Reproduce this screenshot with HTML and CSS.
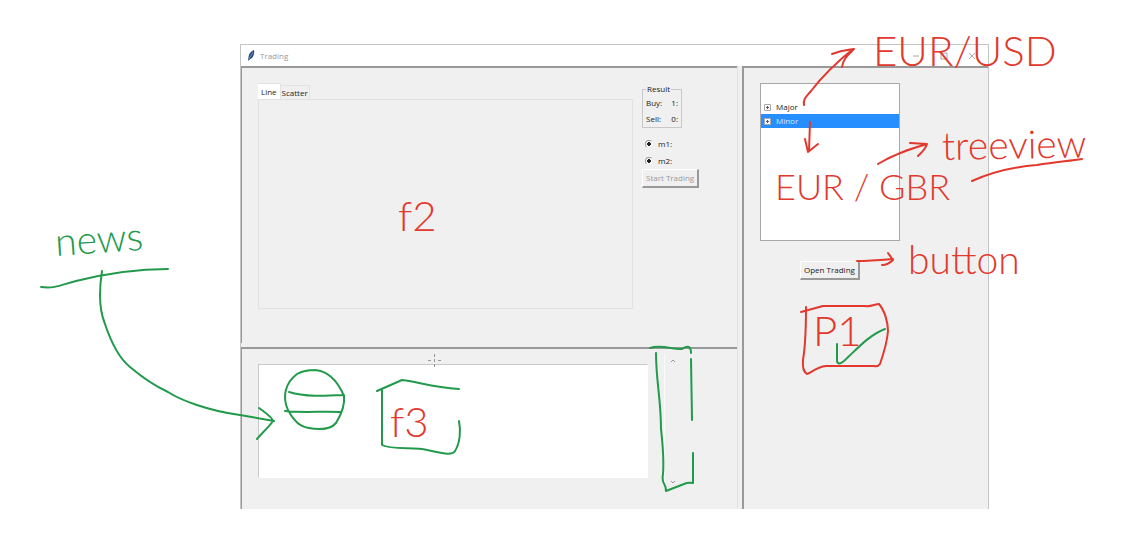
FILE: index.html
```html
<!DOCTYPE html>
<html lang="en">
<head>
<meta charset="utf-8">
<title>Trading</title>
<link rel="stylesheet" href="styles.css">
</head>
<body>
<main class="window">
  <header class="titlebar">
    <svg class="feather" viewBox="0 0 8 12" aria-hidden="true"><path d="M1 11 L1.500 7 Q2 2 7 0 Q8 4 5 8 L2 10Z" fill="#284b78"/><path d="M2 9 L6 2" stroke="#8eb0d2" stroke-width=".7"/></svg>
    <h1 class="title">Trading</h1>
    <div class="controls">
      <button class="control" aria-label="Minimize"><svg viewBox="0 0 8 8"><path d="M1 4H7"/></svg></button>
      <button class="control" aria-label="Maximize"><svg viewBox="0 0 8 8"><path d="M1 1H7V7H1Z"/></svg></button>
      <button class="control" aria-label="Close"><svg viewBox="0 0 8 8"><path d="M1 1L7 7M7 1L1 7"/></svg></button>
    </div>
  </header>
  <div class="panes">
    <div class="left">
      <section class="pane chart-pane">
        <div class="notebook">
          <div class="tabs" role="tablist">
            <button class="tab active" role="tab" aria-selected="true">Line</button>
            <button class="tab" role="tab" aria-selected="false">Scatter</button>
          </div>
          <div class="sheet" role="tabpanel"></div>
        </div>
        <div class="side">
          <fieldset class="result">
            <legend>Result</legend>
            <div class="row"><span>Buy:</span><span>1:</span></div>
            <div class="row"><span>Sell:</span><span>0:</span></div>
          </fieldset>
          <label class="option"><input type="radio" name="m1" checked>m1:</label>
          <label class="option"><input type="radio" name="m2" checked>m2:</label>
          <button class="push" disabled>Start Trading</button>
        </div>
      </section>
      <section class="pane news-pane">
        <textarea class="news" aria-label="News"></textarea>
        <div class="scroll">
          <button class="arrow" aria-label="Scroll up"><svg viewBox="0 0 6 6"><path d="M1 4L3 2L5 4"/></svg></button>
          <button class="arrow" aria-label="Scroll down"><svg viewBox="0 0 6 6"><path d="M1 2L3 4L5 2"/></svg></button>
        </div>
      </section>
    </div>
    <section class="pane tree-pane">
      <ul class="tree" role="tree">
        <li class="item" role="treeitem"><svg class="plus" viewBox="0 0 7 7"><path d="M.5 .5H6.5V6.5H.5Z" fill="#fff" stroke="#aaa"/><path d="M2 3.5H5M3.5 2V5" stroke="#556"/></svg>Major</li>
        <li class="item selected" role="treeitem" aria-selected="true"><svg class="plus" viewBox="0 0 7 7"><path d="M.5 .5H6.5V6.5H.5Z" fill="#fff" stroke="#aaa"/><path d="M2 3.5H5M3.5 2V5" stroke="#556"/></svg>Minor</li>
      </ul>
      <button class="push">Open Trading</button>
    </section>
  </div>
</main>
<svg class="ink" viewBox="0 0 1125 547">
  <g class="cursor"><path d="M434.500 354V357M434.500 359V362M434.500 364V367M428 360.500H431M438 360.500H441"/></g>
  <g class="red">
    <path d="M804 105C803 99 806 97 811 91C824 74 837 62 853 49M832 54C842 50 847 50 854 49C848 55 843 59 842 67"/>
    <path d="M810 122L809 151M805 139L808 152L818 144"/>
    <path d="M878 164C894 154 910 149 927 144M910 143L927 144C925 150 921 153 918 156"/>
    <path d="M972 181C988 174 1012 167 1037 165C1056 162 1069 161 1082 159"/>
    <path d="M857 261C870 261 881 260 893 259M888 253L893 260C889 264 886 265 882 265"/>
    <path d="M801 312L823 306H865C871 307 875 304 879 304C885 311 888 323 888 331C887 344 883 355 880 364Q878 367 874 366H826C816 367 811 373 807 374Q802 371 803 360C806 342 806 326 806 307"/>
    <text class="big" x="873" y="66">EUR/USD</text>
    <text x="775" y="200">EUR / GBR</text>
    <text class="word" x="942" y="160" transform="rotate(-1 942 160)">treeview</text>
    <text class="word" x="908" y="274">button</text>
    <text class="big" x="398" y="231">f2</text>
    <text class="big" x="390" y="437">f3</text>
    <text class="big" x="813" y="346">P1</text>
  </g>
  <g class="green">
    <text class="word" x="56" y="256" transform="rotate(-4 56 256)">news</text>
    <path d="M41 287C56 289 63 284 76 281C108 273 139 269 168 269"/>
    <path d="M102 271C98 297 100 312 105 324C112 345 120 359 130 367C143 378 155 386 168 392C180 400 209 411 240 415L274 421M259 408C266 413 273 418 273 421C269 427 262 433 257 439"/>
    <path d="M315 370C329 371 338 382 344 396C345 405 341 415 336 423Q331 429 320 429C303 429 296 425 288 410C282 397 285 383 297 374Q304 370 315 370M289 392C305 397 324 396 344 395M285 411C302 413 323 411 340 412"/>
    <path d="M377 391L402 380C420 382 430 387 459 389M382 389L382 445C391 450 414 447 427 450C442 453 452 456 455 451C460 443 461 431 459 421"/>
    <path d="M650 348C662 344 673 350 682 349Q691 343 691 353M656 353C656 381 661 399 661 429C663 447 664 462 663 474C661 485 666 482 666 491L684 484Q688 482 693 483V453M691 359L692 420"/>
    <path d="M837 344V361Q838 366 844 361C857 349 869 335 885 329"/>
  </g>
</svg>
</body>
</html>
```
FILE: styles.css
```css
* { box-sizing: border-box; }
body {
  position: relative;
  margin: 0;
  padding: 44px 136px 38px 240px;
  background: #fff;
  color: #222;
  font: 8px/12px "Open Sans", "Noto Sans", sans-serif;
}
button { font: inherit; color: inherit; }
.window { border: 1px solid #c4c4c4; border-bottom: 0; background: #f0f0f0; }
.titlebar { display: flex; align-items: center; height: 21px; padding-left: 6px; background: #fff; }
.feather { width: 8px; height: 12px; margin-right: 5px; }
.title { flex: 1; margin: 0; font: inherit; color: #999; }
.controls { display: flex; gap: 20px; padding-right: 12px; }
.control { display: flex; padding: 0; border: 0; background: none; }
.control svg { width: 8px; height: 8px; fill: none; stroke: #aaa; }
.panes { display: grid; grid-template-columns: 1fr 246px; gap: 4px; }
.left { display: flex; flex-direction: column; gap: 4px; min-width: 0; border-right: 1px solid #e2e2e2; }
.pane { border: 2px solid #999; border-right: 0; border-bottom: 0; }
.left .pane { border-left-width: 1px; }
.chart-pane { display: flex; gap: 9px; padding: 15px 40px 34px 16px; }
.notebook { flex: 1; display: flex; flex-direction: column; }
.tabs { display: flex; align-items: flex-end; }
.tab { height: 14px; padding: 0 1px; border: 1px solid #e2e2e2; border-bottom: 0; border-left: 0; background: #f0f0f0; line-height: 12px; }
.tab.active { height: 16px; padding: 0 3px; background: #fff; }
.sheet { min-height: 210px; border: 1px solid #e2e2e2; }
.side { display: flex; flex-direction: column; align-items: flex-start; width: 55px; }
.result { width: 40px; min-width: 0; margin: 0 0 7px; padding: 0 3px; border: 1px solid #c8c8c8; }
.result legend { padding: 0 1px; }
.row { display: flex; justify-content: space-between; line-height: 16px; }
.option { display: flex; align-items: center; gap: 5px; height: 17px; padding-left: 3px; }
.option input { appearance: none; width: 8px; height: 8px; margin: 0; border: 1px solid #999; border-right-color: #eee; border-bottom-color: #eee; border-radius: 50%; background: radial-gradient(circle, #222 0 2px, #fff 2px); }
.push { height: 19px; padding: 0 3px; border: 1px solid #fff; border-right: 2px solid #999; border-bottom: 2px solid #999; background: #f0f0f0; white-space: nowrap; }
.push:disabled { color: #999; }
.news-pane { display: flex; gap: 16px; padding: 5px 57px 20px 16px; }
.news { flex: 1; min-width: 0; height: 114px; margin: 10px 0 0; padding: 2px; border: 1px solid #c8c8c8; border-right-color: #fff; border-bottom-color: #fff; background: #fff; resize: none; }
.scroll { display: flex; flex-direction: column; justify-content: space-between; width: 16px; height: 135px; border-left: 1px solid #fafafa; }
.arrow { display: flex; justify-content: center; padding: 4px 0; border: 0; background: none; }
.arrow svg { width: 6px; height: 6px; fill: none; stroke: #999; }
.tree-pane { display: flex; flex-direction: column; align-items: flex-start; padding: 15px 16px; }
.tree { width: 140px; height: 158px; margin: 0 0 20px; padding: 16px 0 0; border: 1px solid #a8a8a8; background: #fff; list-style: none; }
.item { display: flex; align-items: center; gap: 5px; height: 14px; padding-left: 3px; }
.item.selected { background: #278eff; color: #d4e8ff; }
.plus { width: 7px; height: 7px; fill: none; }
.tree-pane .push { margin-left: 40px; }
.ink { position: absolute; top: 0; left: 0; width: 100%; pointer-events: none; font: 300 36px Lato, "Open Sans", sans-serif; }
.ink path { fill: none; stroke-width: 2; stroke-linecap: round; stroke-linejoin: round; }
.red path { stroke: #e2382d; }
.red text { fill: #e2382d; }
.green path { stroke: #229a4c; }
.green text { fill: #229a4c; }
.ink .cursor path { stroke: #999; stroke-width: 1; stroke-linecap: butt; }
.big { font-size: 42px; }
.word { font-size: 39px; }
```
